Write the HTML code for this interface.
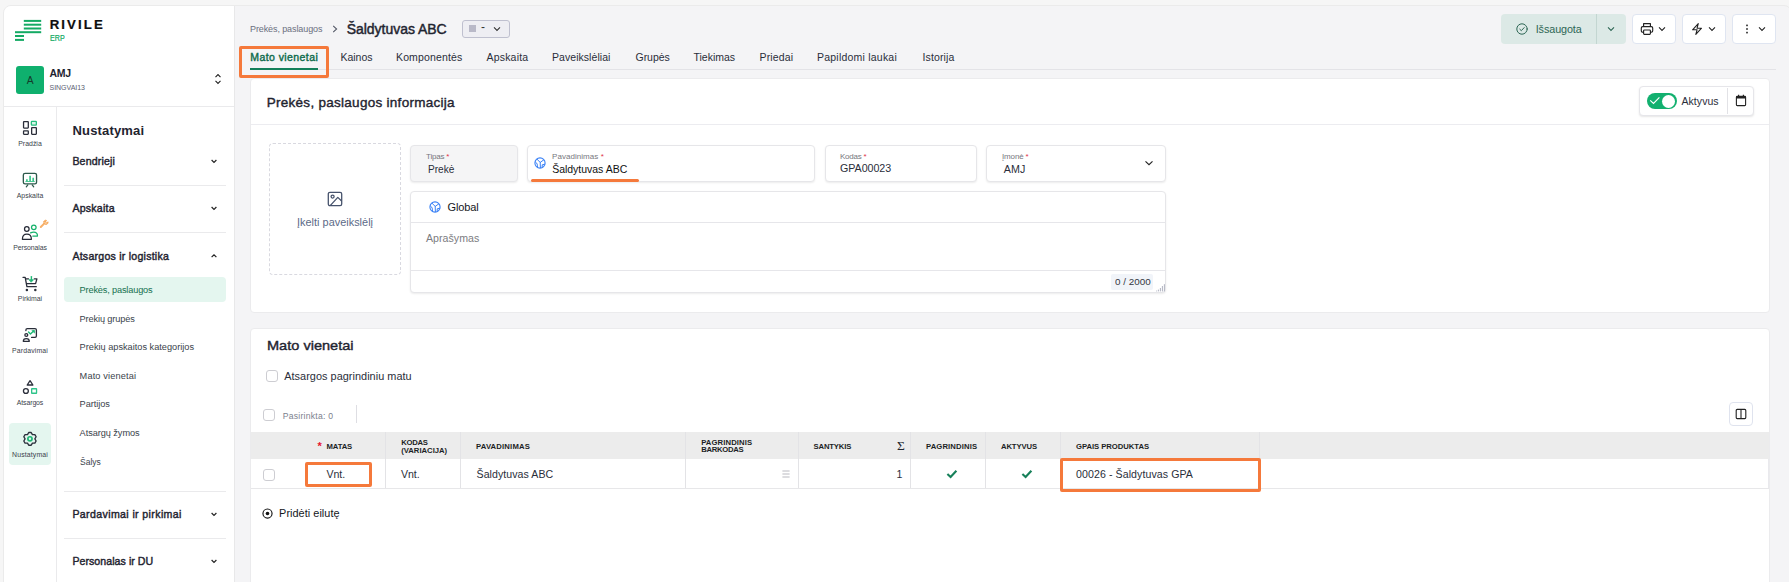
<!DOCTYPE html>
<html lang="lt"><head>
<meta charset="utf-8">
<title>Rivile ERP - Šaldytuvas ABC</title>
<style>
*{box-sizing:border-box;margin:0;padding:0}
html,body{width:1789px;height:582px;overflow:hidden;background:#f6f6f6;font-family:"Liberation Sans",sans-serif;color:#1f2430}
.a{position:absolute}
.t{position:absolute;white-space:nowrap;line-height:1;}
#app{position:absolute;left:3px;top:5px;width:1788.5px;height:600px;background:#f4f4f6;border:1px solid #ebebeb;border-radius:8px;overflow:hidden}
#o{position:absolute;left:-4px;top:-6px;width:1789px;height:582px}
#side{position:absolute;left:4px;top:6px;width:231px;height:600px;background:#fff;border-right:1px solid #e8e8e9}
.hl{position:absolute;height:1px;background:#eaeaec}
.vl{position:absolute;width:1px;background:#eaeaec}
.card{position:absolute;background:#fff;border:1px solid #ebebed;border-radius:4px}
.ob{position:absolute;border:3px solid #f5793b;border-radius:2px}
.fld{position:absolute;background:#fff;border:1px solid #e6e6e9;border-radius:4px;box-shadow:0 1px 2px rgba(0,0,0,.08)}
.btn{position:absolute;background:#fff;border:1px solid #dfe5f1;border-radius:4px}
.cb{position:absolute;width:11.6px;height:11.6px;border:1px solid #cdcdd2;border-radius:3px;background:#fff}
.th{position:absolute;white-space:nowrap;font-size:7.7px;font-weight:700;color:#1c1f26;line-height:8px;margin-top:.2px}
.rl{position:absolute;white-space:nowrap;font-size:6.9px;color:#3a3f4b;line-height:1;text-align:center;width:54px;left:3px}
.mi{position:absolute;white-space:nowrap;font-size:9.2px;color:#3a3f4b;line-height:1;left:79.6px;margin-top:.9px}
.mh{position:absolute;white-space:nowrap;font-size:10.6px;font-weight:400;-webkit-text-stroke:.42px #1f2430;color:#1f2430;line-height:1;left:72.4px;margin-top:.4px}
.tab{top:52px;font-size:10.5px;color:#2a2e3a}
.med{-webkit-text-stroke:.4px currentColor}
.lb{top:152.6px;font-size:8px;color:#77777e}
.rq{color:#e0334a}
.vl2{top:164.1px;font-size:10.7px;color:#2a2e3a}
.col{top:432px;height:56px;background:#e3e3e6}
.td{top:469.2px;font-size:10.6px;color:#2a2e3a}
svg{position:absolute;overflow:visible}
</style>
</head>
<body>
<div id="app"><div id="o">
<!-- SIDEBAR -->
<div id="side"></div>
<!-- logo -->
<svg style="left:0;top:0" width="60" height="50" viewBox="0 0 60 50">
  <g fill="#14aa64">
    <rect x="23.8" y="19.9" width="17.4" height="2"></rect>
    <rect x="23.8" y="23.7" width="17.4" height="2"></rect>
    <rect x="23.8" y="27.5" width="17.4" height="2"></rect>
    <rect x="15" y="31.2" width="26.2" height="2"></rect>
    <rect x="15" y="35" width="9" height="2"></rect>
    <rect x="15" y="38.9" width="9" height="2"></rect>
  </g>
</svg>
<div class="t" style="left: 49.7px; top: 18px; font-size: 13.2px; font-weight: 700; color: rgb(13, 13, 13); -webkit-text-stroke: 0.2px rgb(13, 13, 13); letter-spacing: 2.1px;">RIVILE</div>
<div class="t" style="left: 49.7px; top: 33.8px; font-size: 8.4px; color: rgb(20, 170, 100); -webkit-text-stroke: 0.2px rgb(20, 170, 100); transform: scaleX(0.853); transform-origin: 0px 50%;">ERP</div>
<!-- account -->
<div class="a" style="left:16px;top:66px;width:28px;height:28px;background:#0fb06e;border-radius:3px"></div>
<div class="t" style="left:26.7px;top:76px;font-size:10.3px;color:#143b2b">A</div>
<div class="t" style="left: 49.5px; top: 68px; font-size: 10.5px; font-weight: 700; color: rgb(31, 36, 48); letter-spacing: -0.24px;">AMJ</div>
<div class="t" style="left: 49.5px; top: 83.5px; font-size: 7px; color: rgb(90, 96, 114); letter-spacing: -0.02px;">SINGVAI13</div>
<svg style="left:214px;top:73px" width="8" height="12" viewBox="0 0 8 12"><path d="M1.5 4.2 L4 1.6 L6.5 4.2 M1.5 7.8 L4 10.4 L6.5 7.8" fill="none" stroke="#222" stroke-width="1.1"></path></svg>
<div class="hl" style="left:4px;top:106px;width:230px"></div>
<div class="vl" style="left:56px;top:107px;height:500px"></div>
<!-- rail -->
<div class="a" style="left:9px;top:423px;width:42px;height:42px;background:#e4f6ef;border-radius:4px"></div>
<!-- Pradzia -->
<svg style="left:0;top:0" width="60" height="140" viewBox="0 0 60 140" fill="none" stroke-width="1.3" stroke-linejoin="round">
  <rect x="23.55" y="121.55" width="4.75" height="6.5" rx=".5" stroke="#2a2e3a"></rect>
  <rect x="23.55" y="130.95" width="4.75" height="3.4" rx=".5" stroke="#2a2e3a"></rect>
  <rect x="31.35" y="121.35" width="5" height="3.8" rx=".6" stroke="#25bd7e" fill="#d9f4e8"></rect>
  <rect x="31.65" y="127.55" width="4.7" height="6.8" rx=".5" stroke="#2a2e3a"></rect>
</svg>
<div class="rl" style="top: 141px; letter-spacing: 0.04px;">Pradžia</div>
<!-- Apskaita -->
<svg style="left:0;top:0" width="60" height="190" viewBox="0 0 60 190" fill="none" stroke-linecap="round" stroke-linejoin="round">
  <rect x="23.35" y="173.35" width="13.2" height="10.5" rx="1.7" stroke="#2d5a4c" stroke-width="1.35"></rect>
  <path d="M27.8 184.9 L26.3 186.8 M32.2 184.9 L33.7 186.8" stroke="#2d5a4c" stroke-width="1.25"></path>
  <path d="M26.9 181.4 V179.2 M30.1 181.4 V175.8 M33.2 181.4 V177.7" stroke="#3cc48b" stroke-width="1.7" stroke-linecap="butt"></path>
  <path d="M25.8 181.5 H34.4" stroke="#3cc48b" stroke-width=".9"></path>
</svg>
<div class="rl" style="top: 193px; letter-spacing: 0.01px;">Apskaita</div>
<!-- Personalas -->
<svg style="left:0;top:0" width="60" height="250" viewBox="0 0 60 250" fill="none" stroke-linecap="round" stroke-linejoin="round" stroke-width="1.25">
  <circle cx="33.8" cy="227.3" r="2.3" stroke="#17b26c"></circle>
  <path d="M30.6 232.9 C31.4 232.4 32.5 232.1 33.7 232.1 C36.2 232.1 37.5 233.6 37.5 236 H32.8" stroke="#17b26c"></path>
  <circle cx="26.8" cy="229" r="2.3" stroke="#262a36"></circle>
  <path d="M22.4 239.3 C22.4 236.2 24.2 234.2 26.9 234.2 C29.6 234.2 31.4 236.2 31.4 239.3 Z" stroke="#262a36"></path>
  <path d="M40.8 227 L44.4 223.4" stroke="#f8b06a" stroke-width="2"></path>
  <path d="M44.2 221.2 C44.6 220.4 45.6 220 46.4 220.4 L45.4 222 L46.6 223 L47.8 221.8 C48.2 222.8 47.8 223.8 46.8 224.2 C45.8 224.6 44.6 224.2 44.2 223.4 C43.8 222.6 43.8 222 44.2 221.2 Z" stroke="#f6a14d" stroke-width="1" fill="#fbd3a6"></path>
</svg>
<div class="rl" style="top: 245px; letter-spacing: -0.09px;">Personalas</div>
<!-- Pirkimai -->
<svg style="left:0;top:0" width="60" height="295" viewBox="0 0 60 295" fill="none" stroke-linecap="round" stroke-linejoin="round" stroke-width="1.3">
  <path d="M23 277.3 H25.2 L26.9 286.7 H36.3" stroke="#2a2e3a"></path>
  <path d="M26 278.8 H28.5 M34.3 278.8 H36.9 L35.6 283.7 H26.6" stroke="#2a2e3a"></path>
  <circle cx="26.9" cy="290" r="1.25" fill="#2a2e3a"></circle><circle cx="35.3" cy="290" r="1.25" fill="#2a2e3a"></circle>
  <path d="M31.4 276.6 V280" stroke="#1fb876" stroke-width="1.4"></path>
  <path d="M29.3 279.7 H33.5 L31.4 282 Z" fill="#1fb876" stroke="#1fb876" stroke-width=".8"></path>
</svg>
<div class="rl" style="top: 296px; letter-spacing: -0.03px;">Pirkimai</div>
<!-- Pardavimai -->
<svg style="left:0;top:0" width="60" height="345" viewBox="0 0 60 345" fill="none" stroke-linecap="round" stroke-linejoin="round" stroke-width="1.3">
  <path d="M25.9 330.6 V330 C25.9 329.2 26.5 328.7 27.3 328.7 H35 C35.9 328.7 36.4 329.2 36.4 330 V336 C36.4 336.8 35.9 337.4 35 337.4 H31.6" stroke="#2a2e3a"></path>
  <circle cx="26.3" cy="335" r="1.45" stroke="#2a2e3a"></circle>
  <path d="M23.3 341.3 C23.3 339.6 24.5 338.6 26.3 338.6 C28.1 338.6 29.3 339.6 29.3 341.3 Z" stroke="#2a2e3a"></path>
  <path d="M28.5 332 L30.5 334 L33.6 331" stroke="#1fb876" stroke-width="1.4"></path>
  <path d="M32.3 330.4 H34.6 V332.8 Z" fill="#1fb876" stroke="#1fb876" stroke-width=".7"></path>
</svg>
<div class="rl" style="top: 348px; letter-spacing: 0.13px;">Pardavimai</div>
<!-- Atsargos -->
<svg style="left:0;top:0" width="60" height="400" viewBox="0 0 60 400" fill="none" stroke-linejoin="round" stroke-width="1.3">
  <path d="M30.05 380.7 L32.9 385 H27.2 Z" stroke="#2a2e3a"></path>
  <circle cx="25.9" cy="391" r="2.45" stroke="#2a2e3a"></circle>
  <rect x="31.65" y="388.75" width="4.9" height="4.5" rx=".3" stroke="#2fc48a" fill="#fbfffd"></rect>
</svg>
<div class="rl" style="top: 400px; letter-spacing: -0.1px;">Atsargos</div>
<!-- Nustatymai -->
<svg style="left:0;top:0" width="60" height="460" viewBox="0 0 60 460" fill="none" stroke-linejoin="round">
  <path d="M28.72 432.48 L31.20 432.48 L32.41 434.62 L34.87 434.60 L36.11 436.74 L34.86 438.86 L36.11 440.98 L34.87 443.12 L32.41 443.10 L31.20 445.24 L28.72 445.24 L27.51 443.10 L25.05 443.12 L23.81 440.98 L25.06 438.86 L23.81 436.74 L25.05 434.60 L27.51 434.62 Z" stroke="#2a2f3b" stroke-width="1.35"></path>
  <circle cx="29.96" cy="438.86" r="2.1" stroke="#1fb876" stroke-width="1.7"></circle>
</svg>
<div class="rl" style="top: 452px; letter-spacing: 0.13px;">Nustatymai</div>
<!--RAIL-->
<!-- menu -->
<div class="t" style="left: 72.5px; top: 124px; font-size: 13px; font-weight: 700; color: rgb(31, 36, 48); letter-spacing: 0.17px;">Nustatymai</div>
<div class="mh" style="top: 156px; letter-spacing: 0.15px;">Bendrieji</div>
<div class="hl" style="left:64px;top:185px;width:162px"></div>
<div class="mh" style="top: 203px; letter-spacing: 0.22px;">Apskaita</div>
<div class="hl" style="left:64px;top:232px;width:162px"></div>
<div class="mh" style="top: 251px; letter-spacing: 0.23px;">Atsargos ir logistika</div>
<div class="a" style="left:64px;top:277px;width:162px;height:25px;background:#e4f6ef;border-radius:4px"></div>
<div class="mi" style="top: 285px; color: rgb(21, 112, 78); letter-spacing: -0.16px;">Prekės, paslaugos</div>
<div class="mi" style="top: 314px; letter-spacing: -0.12px;">Prekių grupės</div>
<div class="mi" style="top: 342px; letter-spacing: 0px;">Prekių apskaitos kategorijos</div>
<div class="mi" style="top: 371px; letter-spacing: 0.15px;">Mato vienetai</div>
<div class="mi" style="top: 399px; letter-spacing: -0.06px;">Partijos</div>
<div class="mi" style="top: 428px; letter-spacing: -0.06px;">Atsargų žymos</div>
<div class="mi" style="top: 457px; transform: scaleX(0.926); transform-origin: 0px 50%;">Šalys</div>
<div class="hl" style="left:64px;top:491px;width:162px"></div>
<div class="mh" style="top: 509px; letter-spacing: 0.37px;">Pardavimai ir pirkimai</div>
<div class="hl" style="left:64px;top:538px;width:162px"></div>
<div class="mh" style="top: 556px; letter-spacing: 0.05px;">Personalas ir DU</div>
<svg style="left:210px;top:157px" width="8" height="8" viewBox="0 0 8 8"><path d="M1.6 3 L4 5.4 L6.4 3" fill="none" stroke="#222" stroke-width="1.2"></path></svg>
<svg style="left:210px;top:204px" width="8" height="8" viewBox="0 0 8 8"><path d="M1.6 3 L4 5.4 L6.4 3" fill="none" stroke="#222" stroke-width="1.2"></path></svg>
<svg style="left:210px;top:252px" width="8" height="8" viewBox="0 0 8 8"><path d="M1.6 5.2 L4 2.8 L6.4 5.2" fill="none" stroke="#222" stroke-width="1.2"></path></svg>
<svg style="left:210px;top:510px" width="8" height="8" viewBox="0 0 8 8"><path d="M1.6 3 L4 5.4 L6.4 3" fill="none" stroke="#222" stroke-width="1.2"></path></svg>
<svg style="left:210px;top:557px" width="8" height="8" viewBox="0 0 8 8"><path d="M1.6 3 L4 5.4 L6.4 3" fill="none" stroke="#222" stroke-width="1.2"></path></svg>
<!--MENU-->
<!-- header -->
<div class="t" style="left: 250px; top: 24.5px; font-size: 9px; color: rgb(106, 111, 126); letter-spacing: -0.1px;">Prekės, paslaugos</div>
<svg style="left:331px;top:24px" width="8" height="10" viewBox="0 0 8 10"><path d="M2.2 1.8 L5.6 5 L2.2 8.2" fill="none" stroke="#555a68" stroke-width="1.1"></path></svg>
<div class="t" style="left: 346.7px; top: 22px; font-size: 14px; color: rgb(31, 36, 48); -webkit-text-stroke: 0.45px rgb(31, 36, 48); letter-spacing: -0.03px;">Šaldytuvas ABC</div>
<div class="a" style="left:462px;top:20px;width:48px;height:18px;background:#eeeef3;border:1px solid #bfc0cf;border-radius:3px"></div>
<div class="a" style="left:469px;top:25px;width:7px;height:7px;background:#b9b9c8"></div>
<div class="t" style="left:481px;top:21.3px;font-size:12px;color:#333">-</div>
<svg style="left:492px;top:24px" width="10" height="10" viewBox="0 0 10 10"><path d="M2 3.4 L5 6.4 L8 3.4" fill="none" stroke="#333" stroke-width="1.1"></path></svg>
<!-- tabs -->
<div class="hl" style="left:250px;top:69px;width:1526px;background:#e3e3e7"></div>
<div class="t tab" style="left: 250.3px; color: rgb(15, 107, 76); -webkit-text-stroke: 0.4px rgb(15, 107, 76); letter-spacing: 0.42px;">Mato vienetai</div>
<div class="a" style="left:250px;top:68px;width:68px;height:2px;background:#14805a"></div>
<div class="t tab" style="left: 340.5px; letter-spacing: -0.02px;">Kainos</div>
<div class="t tab" style="left: 396px; letter-spacing: 0.14px;">Komponentės</div>
<div class="t tab" style="left: 486.5px; letter-spacing: 0.19px;">Apskaita</div>
<div class="t tab" style="left: 552px; letter-spacing: 0.05px;">Paveikslėliai</div>
<div class="t tab" style="left: 635.5px; letter-spacing: -0.03px;">Grupės</div>
<div class="t tab" style="left: 693.5px; letter-spacing: 0px;">Tiekimas</div>
<div class="t tab" style="left: 759.5px; letter-spacing: 0.14px;">Priedai</div>
<div class="t tab" style="left: 817px; letter-spacing: 0.22px;">Papildomi laukai</div>
<div class="t tab" style="left: 922.5px; letter-spacing: 0.14px;">Istorija</div>
<div class="ob" style="left:239px;top:46px;width:89.5px;height:31.5px"></div>
<!-- right buttons -->
<div class="a" style="left:1501px;top:14px;width:125px;height:30px;background:#dce9e6;border-radius:4px"></div>
<div class="vl" style="left:1596px;top:14px;height:30px;background:#c3d6d1"></div>
<svg style="left:1515.5px;top:23px" width="12" height="12" viewBox="0 0 12 12" fill="none" stroke="#2d6654" stroke-width="1" stroke-linecap="round" stroke-linejoin="round"><circle cx="6" cy="6" r="5.2"></circle><path d="M3.8 6.2 L5.3 7.7 L8.2 4.6"></path></svg>
<div class="t" style="left: 1535.7px; top: 23.9px; font-size: 10.8px; color: rgb(45, 102, 84); letter-spacing: -0.09px;">Išsaugota</div>
<svg style="left:1606px;top:24px" width="10" height="10" viewBox="0 0 10 10"><path d="M2 3.4 L5 6.4 L8 3.4" fill="none" stroke="#2d6654" stroke-width="1.1"></path></svg>
<div class="btn" style="left:1632px;top:14px;width:43.5px;height:30px"></div>
<div class="btn" style="left:1682px;top:14px;width:43.5px;height:30px"></div>
<div class="btn" style="left:1732px;top:14px;width:43.5px;height:30px"></div>
<!-- printer -->
<svg style="left:1640px;top:22px" width="14" height="14" viewBox="0 0 14 14" fill="none" stroke="#222" stroke-width="1.15" stroke-linejoin="round"><path d="M3.6 4.6 V1.6 H10.4 V4.6"></path><rect x="1.3" y="4.6" width="11.4" height="5.6" rx="1.4"></rect><rect x="3.6" y="8" width="6.8" height="4.4" rx=".8" fill="#fff"></rect></svg>
<svg style="left:1657px;top:24px" width="10" height="10" viewBox="0 0 10 10"><path d="M2 3.4 L5 6.4 L8 3.4" fill="none" stroke="#222" stroke-width="1.1"></path></svg>
<!-- bolt -->
<svg style="left:1690px;top:22px" width="14" height="14" viewBox="1690 22 14 14" fill="none" stroke="#222" stroke-width="1.1" stroke-linejoin="round"><path d="M1692.56 29.82 L1698.27 23.7 L1697.05 28.18 H1701.54 L1695.83 34.3 L1697.05 29.82 Z"></path></svg>
<svg style="left:1707px;top:24px" width="10" height="10" viewBox="0 0 10 10"><path d="M2 3.4 L5 6.4 L8 3.4" fill="none" stroke="#222" stroke-width="1.1"></path></svg>
<!-- more -->
<svg style="left:1742px;top:22px" width="10" height="14" viewBox="0 0 10 14" fill="#222"><rect x="4.2" y="2.6" width="1.6" height="1.6"></rect><rect x="4.2" y="6.2" width="1.6" height="1.6"></rect><rect x="4.2" y="9.8" width="1.6" height="1.6"></rect></svg>
<svg style="left:1757px;top:24px" width="10" height="10" viewBox="0 0 10 10"><path d="M2 3.4 L5 6.4 L8 3.4" fill="none" stroke="#222" stroke-width="1.1"></path></svg>
<!--HEADER-->
<!-- card 1 -->
<div class="card" style="left:250px;top:78px;width:1520px;height:235px"></div>
<div class="t med" style="left: 266.7px; top: 95.6px; font-size: 13.5px; color: rgb(31, 36, 48); letter-spacing: 0.28px;">Prekės, paslaugos informacija</div>
<div class="hl" style="left:251px;top:124px;width:1518px;background:#ececf0"></div>
<!-- aktyvus -->
<div class="a" style="left:1639px;top:86px;width:114.5px;height:29.5px;background:#fff;border:1px solid #e6e6ea;border-radius:4px;box-shadow:0 1px 2px rgba(0,0,0,.1)"></div>
<div class="vl" style="left:1727px;top:88px;height:26px;background:#e2e2e6"></div>
<div class="a" style="left:1647px;top:93px;width:30px;height:16px;background:#12b06f;border-radius:8px"></div>
<div class="a" style="left:1662px;top:94.5px;width:13px;height:13px;background:#fff;border-radius:7px"></div>
<svg style="left:1649px;top:96px" width="12" height="10" viewBox="0 0 12 10"><path d="M1.2 4.3 L4.5 7.4 L10.4 1.4" fill="none" stroke="#fff" stroke-width="1.15"></path></svg>
<div class="t" style="left: 1681.5px; top: 96px; font-size: 10.5px; color: rgb(42, 46, 58); letter-spacing: 0.06px;">Aktyvus</div>
<svg style="left:1734.5px;top:94px" width="12" height="13" viewBox="0 0 12 13" fill="none" stroke="#222" stroke-width="1.1" stroke-linejoin="round"><rect x="1.4" y="2.4" width="9.2" height="9.2" rx=".8"></rect><path d="M1.4 3.8 H10.6" stroke-width="1.4"></path><path d="M3.6 .8 V2.6 M8.4 .8 V2.6" stroke-width="1.2"></path></svg>
<!-- upload -->
<div class="a" style="left:269px;top:143px;width:132px;height:132px;border:1px dashed #d9d9e0;border-radius:4px;background:#fff"></div>
<svg style="left:327px;top:191px" width="16" height="16" viewBox="0 0 16 16" fill="none" stroke="#46526c" stroke-width="1.3" stroke-linejoin="round"><rect x="1.3" y="1.3" width="13.4" height="13.4" rx="1.6"></rect><circle cx="5.6" cy="5.6" r="1.5"></circle><path d="M14.6 10 L10.8 6.4 L3.2 14.6"></path></svg>
<div class="t" style="left: 297px; top: 216.8px; font-size: 10.9px; color: rgb(92, 106, 136); letter-spacing: 0.02px;">Įkelti paveikslėlį</div>
<!-- Tipas -->
<div class="fld" style="left:410px;top:145px;width:108px;height:37px;background:#f5f5f6"></div>
<div class="t lb" style="left: 426px; letter-spacing: -0.2px;">Tipas <span class="rq">*</span></div>
<div class="t vl2" style="left: 427.5px; transform: scaleX(0.945); transform-origin: 0px 50%;">Prekė</div>
<!-- Pavadinimas -->
<div class="fld" style="left:527.3px;top:145px;width:287.5px;height:37px"></div>
<svg class="globe" style="left:534px;top:157px" width="12" height="12" viewBox="0 0 12 12"><g fill="none" stroke="#3b82f6" stroke-width="1.1" stroke-linecap="round" stroke-linejoin="round"><circle cx="6" cy="6" r="5.1"></circle><path d="M3 2.2 L6.2 5.4 L9.6 3 M6.2 5.4 L6.4 10.6 M1.4 4.8 C3 5.8 3.8 8 3.6 10.2 M8.2 10 L8.2 7.8 L10.8 7.2" stroke-width="1"></path></g></svg>
<div class="t lb" style="left: 552px; letter-spacing: 0.05px;">Pavadinimas <span class="rq">*</span></div>
<div class="t" style="left: 552.2px; top: 164.4px; font-size: 10.5px; color: rgb(17, 17, 17); letter-spacing: -0.02px;">Šaldytuvas ABC</div>
<div class="a" style="left:531px;top:179px;width:108px;height:3px;background:#f5793b;border-radius:1.5px"></div>
<!-- Kodas -->
<div class="fld" style="left:824.5px;top:145px;width:152.5px;height:37px"></div>
<div class="t lb" style="left: 840px; letter-spacing: -0.22px;">Kodas <span class="rq">*</span></div>
<div class="t vl2" style="left: 840px; top: 163.1px; letter-spacing: -0.04px;">GPA00023</div>
<!-- Imone -->
<div class="fld" style="left:986px;top:145px;width:179.5px;height:37px"></div>
<div class="t lb" style="left: 1002px; letter-spacing: -0.15px;">Įmonė <span class="rq">*</span></div>
<div class="t vl2" style="left: 1003.8px; letter-spacing: 0.06px;">AMJ</div>
<svg style="left:1144px;top:158.3px" width="10" height="10" viewBox="0 0 10 10"><path d="M1.5 3.4 L5 6.7 L8.5 3.4" fill="none" stroke="#222" stroke-width="1.15"></path></svg>
<!-- Global -->
<div class="fld" style="left:410px;top:191px;width:755.5px;height:102px"></div>
<div class="hl" style="left:411px;top:222px;width:753.5px;background:#e6e6ea"></div>
<div class="hl" style="left:411px;top:270px;width:753.5px;background:#e6e6ea"></div>
<svg class="globe" style="left:429px;top:201px" width="12" height="12" viewBox="0 0 12 12"><g fill="none" stroke="#3b82f6" stroke-width="1.1" stroke-linecap="round" stroke-linejoin="round"><circle cx="6" cy="6" r="5.1"></circle><path d="M3 2.2 L6.2 5.4 L9.6 3 M6.2 5.4 L6.4 10.6 M1.4 4.8 C3 5.8 3.8 8 3.6 10.2 M8.2 10 L8.2 7.8 L10.8 7.2" stroke-width="1"></path></g></svg>
<div class="t" style="left: 447.5px; top: 201.9px; font-size: 11px; color: rgb(21, 23, 28); letter-spacing: -0.1px;">Global</div>
<div class="t" style="left: 426px; top: 233px; font-size: 10.6px; color: rgb(124, 124, 127); letter-spacing: 0.04px;">Aprašymas</div>
<div class="a" style="left:1111px;top:274px;width:42px;height:15.5px;background:#f1f4f9;border-radius:2px"></div>
<div class="t" style="left: 1114.7px; top: 277.9px; font-size: 8.7px; color: rgb(51, 55, 63); transform: scaleX(1.134); transform-origin: 0px 50%;">0 / 2000</div>
<svg style="left:1156px;top:283px" width="9" height="9" viewBox="0 0 9 9" stroke="#9a9fb0" stroke-width=".8"><path d="M8.4 1.2 V8.4 M6.4 3 V8.4 M4.4 5 V8.4 M2.4 6.6 V8.4 M.6 7.6 V8.4"></path></svg>
<!--CARD1-->
<!-- card 2 -->
<div class="card" style="left:250px;top:328px;width:1520px;height:300px"></div>
<div class="t med" style="left: 266.7px; top: 338.6px; font-size: 13.5px; color: rgb(31, 36, 48); transform: scaleX(1.078); transform-origin: 0px 50%;">Mato vienetai</div>
<div class="cb" style="left:266.2px;top:370.2px"></div>
<div class="t" style="left: 284.2px; top: 371px; font-size: 10.9px; color: rgb(42, 46, 58); letter-spacing: 0.04px;">Atsargos pagrindiniu matu</div>
<div class="cb" style="left:263.3px;top:409.4px"></div>
<div class="t" style="left: 282.7px; top: 411.6px; font-size: 8.6px; color: rgb(123, 128, 141); letter-spacing: 0.25px;">Pasirinkta: 0</div>
<div class="vl" style="left:356px;top:405px;height:18px;background:#dedee3"></div>
<div class="btn" style="left:1729px;top:402px;width:24px;height:24px;border-color:#dfe3ee"></div>
<svg style="left:1735px;top:408px" width="12" height="12" viewBox="0 0 12 12" fill="none" stroke="#222" stroke-width="1.1"><rect x="1.2" y="1.4" width="9.6" height="9.2" rx="1"></rect><path d="M6 1.4 V10.6"></path></svg>
<!-- table -->
<div class="a" style="left:251px;top:432px;width:1518px;height:27px;background:#ececec"></div>
<div class="hl" style="left:251px;top:488px;width:1518px;background:#e7e7e9"></div>
<div class="vl col" style="left:385px"></div>
<div class="vl col" style="left:460px"></div>
<div class="vl col" style="left:685px"></div>
<div class="vl col" style="left:798px"></div>
<div class="vl col" style="left:910px"></div>
<div class="vl col" style="left:985px"></div>
<div class="vl col" style="left:1060px"></div>
<div class="vl col" style="left:1259px"></div>
<div class="t" style="left:317.6px;top:441.4px;font-size:11px;font-weight:700;color:#e6142f">*</div>
<div class="th" style="left: 326.5px; top: 442.5px; letter-spacing: -0.12px;">MATAS</div>
<div class="th" style="left: 401.2px; top: 438.4px; letter-spacing: -0.24px;">KODAS</div>
<div class="th" style="left: 401.2px; top: 446.4px; letter-spacing: 0px;">(VARIACIJA)</div>
<div class="th" style="left: 476px; top: 442.5px; letter-spacing: 0.17px;">PAVADINIMAS</div>
<div class="th" style="left: 701.2px; top: 438.4px; letter-spacing: 0.11px;">PAGRINDINIS</div>
<div class="th" style="left: 701.2px; top: 446.2px; letter-spacing: -0.27px;">BARKODAS</div>
<div class="th" style="left: 813.5px; top: 442.5px; letter-spacing: -0.14px;">SANTYKIS</div>
<div class="t" style="left:897px;top:439px;font-size:13.5px;color:#22262e;font-family:'Liberation Serif','DejaVu Serif',serif">Σ</div>
<div class="th" style="left: 926px; top: 442.5px; letter-spacing: 0.12px;">PAGRINDINIS</div>
<div class="th" style="left: 1001px; top: 442.5px; letter-spacing: -0.12px;">AKTYVUS</div>
<div class="th" style="left: 1076px; top: 442.5px; letter-spacing: -0.04px;">GPAIS PRODUKTAS</div>
<!-- row -->
<div class="cb" style="left:263.3px;top:469.1px"></div>
<div class="t td" style="left: 326.5px; letter-spacing: -0.05px;">Vnt.</div>
<div class="t td" style="left: 401px; letter-spacing: -0.05px;">Vnt.</div>
<div class="t td" style="left: 476.5px; letter-spacing: 0.06px;">Šaldytuvas ABC</div>
<svg style="left:781px;top:469px" width="10" height="10" viewBox="0 0 10 10" stroke="#b9b9c0" stroke-width="1"><path d="M1.4 2 H8.6 M1.4 5 H8.6 M1.4 8 H8.6"></path></svg>
<div class="t td" style="left:896.5px">1</div>
<svg style="left:946px;top:469px" width="12" height="10" viewBox="0 0 12 10"><path d="M1.4 5 L4.6 8 L10.4 1.8" fill="none" stroke="#17805a" stroke-width="2.1"></path></svg>
<svg style="left:1021px;top:469px" width="12" height="10" viewBox="0 0 12 10"><path d="M1.4 5 L4.6 8 L10.4 1.8" fill="none" stroke="#17805a" stroke-width="2.1"></path></svg>
<div class="t td" style="left: 1076px; letter-spacing: 0.08px;">00026 - Šaldytuvas GPA</div>
<div class="ob" style="left:304.5px;top:462px;width:67.5px;height:25px"></div>
<div class="ob" style="left:1060px;top:458px;width:201px;height:33.5px"></div>
<div class="vl" style="left:1768px;top:459px;height:29px;background:#e9e9ed"></div>
<!-- add row -->
<svg style="left:262.4px;top:507.5px" width="11" height="11" viewBox="0 0 11 11"><circle cx="5.5" cy="5.5" r="4.55" fill="none" stroke="#111" stroke-width="1.15"></circle><circle cx="5.5" cy="5.5" r="1.8" fill="#111"></circle></svg>
<div class="t" style="left: 279.1px; top: 508.3px; font-size: 10.9px; color: rgb(21, 23, 28); letter-spacing: 0.04px;">Pridėti eilutę</div>
<!--CARD2-->
</div></div>


</body></html>
